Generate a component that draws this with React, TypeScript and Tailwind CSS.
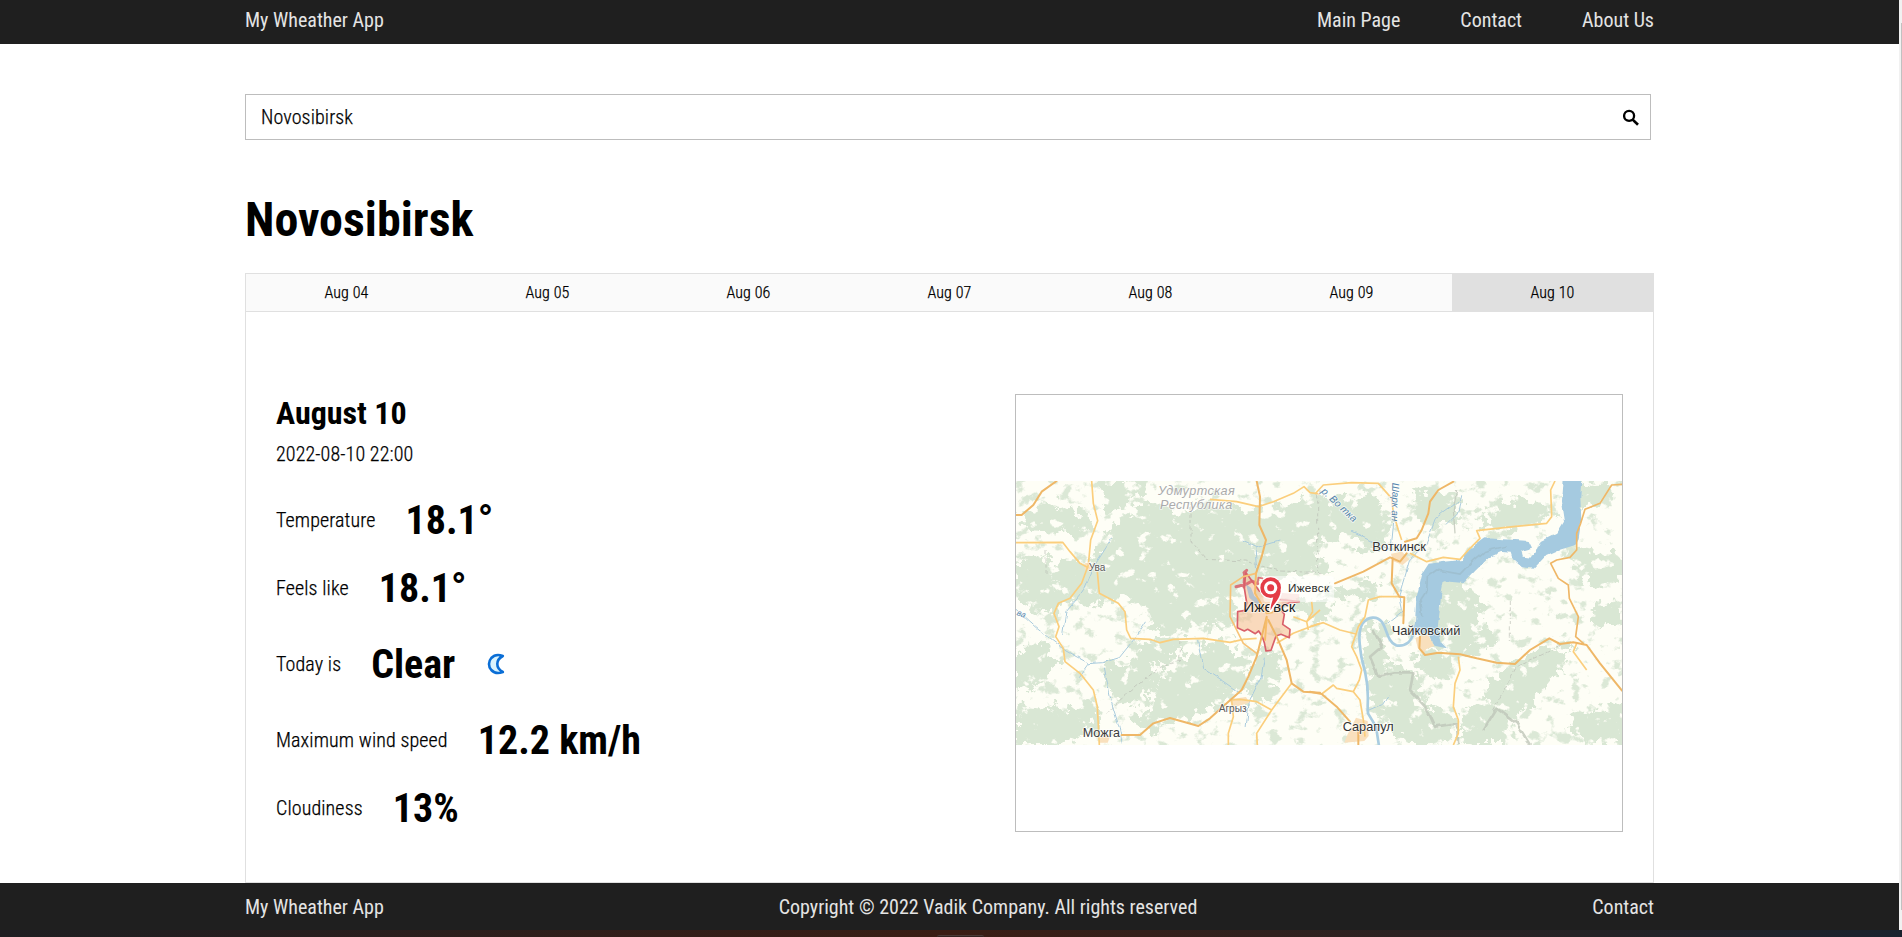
const navLinks = ["Main Page", "Contact", "About Us"];
const days = ["Aug 04", "Aug 05", "Aug 06", "Aug 07", "Aug 08", "Aug 09", "Aug 10"];
const activeDay = "Aug 10";

const lightText = "font-light tracking-[0.11px] [-webkit-text-stroke:0.25px_#000]";

const forests = [
  "M270,110 L345,60 L420,100 L470,75 L560,90 L640,80 L700,80 L760,50 L800,60 L890,130 L965,185 L900,215 L860,170 L790,180 L780,230 L820,290 L640,290 L555,330 L565,460 L500,430 L440,460 L370,470 L330,400 L320,370 L290,355 L230,360 L170,380 L110,310 L0,330 L0,240 L60,225 L130,250 L200,240 L240,160Z",
  "M0,300 L160,320 L120,390 L60,400 L0,370Z",
  "M10,95 L90,75 L190,95 L190,165 L110,155 L30,150Z",
  "M220,0 L340,0 L310,60 L230,100Z",
  "M370,600 L470,500 L560,480 L600,560 L580,630 L530,685 L460,710 L400,725 L340,755 L300,730 L350,660Z",
  "M90,690 L200,665 L215,740 L120,798 L0,798 L0,680Z",
  "M230,560 L330,530 L380,590 L330,660 L250,670Z",
  "M290,475 L440,490 L410,550 L330,550Z",
  "M0,500 L90,490 L110,560 L40,640 L0,620Z",
  "M1090,290 L1170,300 L1205,380 L1190,430 L1250,480 L1160,525 L1050,505 L1070,400Z",
  "M1220,610 L1330,510 L1440,500 L1400,580 L1345,650 L1290,720 L1280,798 L1150,798 L1150,700 L1220,660Z",
  "M890,430 L955,425 L955,550 L1030,580 L1060,670 L1130,710 L1130,798 L1000,798 L940,700 L905,600Z",
  "M1460,0 L1550,0 L1500,80 L1450,95Z",
  "M1200,90 L1330,55 L1410,105 L1300,140 L1210,155Z",
  "M1430,200 L1568,225 L1568,310 L1480,320 L1430,260Z",
  "M730,365 L810,350 L830,395 L770,425Z",
  "M830,325 L940,305 L930,355 L850,355Z",
  "M770,60 L930,40 L970,130 L940,190Z",
  "M1020,30 L1150,40 L1150,90 L1080,150 L1040,130Z",
  "M1420,700 L1568,670 L1568,798 L1470,798Z",
  "M1030,520 L1130,530 L1130,600 L1040,570Z",
  "M620,500 L690,520 L670,640 L610,690 L600,620Z",
  "M1480,380 L1568,370 L1568,440 L1500,430Z",
];

function RegionMap() {
  return (
    <svg viewBox="0 0 1818 792" preserveAspectRatio="none" className="block h-[264px] w-full">
      <defs>
        <filter id="ragged" x="-5%" y="-5%" width="110%" height="110%" colorInterpolationFilters="sRGB">
          <feTurbulence type="fractalNoise" baseFrequency="0.03" numOctaves="4" seed="5" />
          <feDisplacementMap in="SourceGraphic" scale="90" xChannelSelector="R" yChannelSelector="G" />
        </filter>
        <filter id="groves" x="0" y="0" width="100%" height="100%" colorInterpolationFilters="sRGB">
          <feTurbulence type="fractalNoise" baseFrequency="0.024 0.028" numOctaves="5" seed="11" />
          <feColorMatrix values="0 0 0 0 0.859  0 0 0 0 0.910  0 0 0 0 0.839  8 0 0 0 -4.6" />
        </filter>
        <filter id="clearings" x="0" y="0" width="100%" height="100%" colorInterpolationFilters="sRGB">
          <feTurbulence type="fractalNoise" baseFrequency="0.022 0.026" numOctaves="5" seed="23" />
          <feColorMatrix values="0 0 0 0 0.996  0 0 0 0 0.996  0 0 0 0 0.965  0 12 0 0 -7.7" />
        </filter>
        <filter id="wobble" x="-5%" y="-5%" width="110%" height="110%" colorInterpolationFilters="sRGB">
          <feTurbulence type="fractalNoise" baseFrequency="0.03" numOctaves="2" seed="3" />
          <feDisplacementMap in="SourceGraphic" scale="14" xChannelSelector="R" yChannelSelector="G" />
        </filter>
      </defs>

      {/* Land cover */}
      <rect width="1818" height="792" fill="#fefef6" />
      <rect width="1818" height="792" filter="url(#groves)" />
      <g filter="url(#ragged)">
        <g transform="translate(-3 -3) scale(1.1633 1)" fill="#d9e7d4">
          {forests.map((d) => (
            <path key={d} d={d} />
          ))}
        </g>
      </g>
      <rect width="1818" height="792" filter="url(#clearings)" />

      {/* District borders */}
      <g fill="none" stroke="#b9bdb4" strokeWidth="2" strokeDasharray="12 7" filter="url(#wobble)">
        <path d="M525,60 L525,180 L570,235 L690,240 L790,270 L920,275" />
        <path d="M495,480 L490,540 L430,560 L330,640 L270,700" />
        <path d="M905,40 L905,270" />
        <path d="M90,210 L90,280 M1480,360 L1480,480 M1430,690 L1500,560 L1640,490" />
      </g>
      <g transform="translate(882 -33)" fill="none" stroke="#c0c7ba" strokeWidth="8" strokeLinejoin="round" filter="url(#wobble)" opacity="0.8">
        <path d="M190,480 L215,530 L180,560 L205,620 L250,610 L310,610 L300,660 L350,715 L375,770 L440,760 L445,825" />
        <path d="M520,780 L560,715 L620,760 L660,825" />
        <path strokeWidth="4" d="M440,60 L430,120 L435,190" />
      </g>

      {/* Water */}
      <g fill="none" stroke="#a9cbdd" strokeWidth="3" filter="url(#wobble)">
        <path d="M0,385 L60,440 L110,480 L150,510 L220,548 L260,545 L310,530 L350,480 L390,420" />
        <path d="M140,460 L150,390 L200,330 L225,270 L270,200 L290,170 M220,548 L190,590" />
        <path d="M265,560 L285,660 L310,740 L320,790 M545,480 L560,560 L620,600 L670,635" />
        <path d="M745,530 L735,590 L700,660 L690,740 M680,180 L720,200 L725,270 M720,200 L790,180" />
        <path d="M1005,150 L1120,205 M1135,100 L1125,210 M1330,60 L1260,110 L1230,190 L1180,240 L1150,340 L1160,390 L1110,430" />
        <path d="M1055,690 L1100,670 L1120,640 M1290,130 L1330,90 L1340,40" />
      </g>
      <g transform="translate(882 -33)">
        <g filter="url(#wobble)">
          <path fill="#a5cae0" d="M758,25 L814,25 L811,80 L814,150 L806,205 L796,225 L750,239 L706,259 L671,296 L636,292 L608,267 L602,248 L576,246 L536,264 L496,302 L461,339 L401,334 L393,375 L388,435 L383,475 L396,520 L411,535 L376,528 L356,496 L314,475 L319,385 L336,312 L356,281 L396,276 L456,270 L481,237 L526,205 L606,209 L656,213 L666,233 L634,242 L638,260 L661,263 L682,238 L692,213 L742,188 L762,155 L753,95Z" />
          <path fill="none" stroke="#9ebfd0" strokeWidth="5" d="M335,440 L330,400 L350,370 L352,320 L380,300 L450,312 L490,270 L520,245 L590,228" />
        </g>
        <path fill="none" stroke="#a9cde1" strokeWidth="8" d="M315,465 C310,520 285,530 258,526 C232,515 232,480 216,456 C200,436 175,440 158,460 C143,485 148,520 154,560 L166,610 C180,670 170,700 174,730 L198,770 L207,828" />
      </g>

      {/* Towns */}
      <g fill="#f9e0bd">
        <path d="M1125,218 L1158,212 L1180,235 L1160,252 L1130,240Z" />
        <path d="M1198,470 L1235,460 L1255,495 L1230,505 L1225,515 L1205,500Z" />
        <path d="M1020,710 L1055,720 L1058,765 L1045,780 L985,785 L995,760Z" />
        <path d="M208,245 L230,250 L225,270 L205,265Z M245,765 L285,760 L275,785 L250,785Z" />
        <path d="M640,655 L690,648 L700,665 L650,680Z" />
      </g>

      {/* Secondary roads */}
      <g fill="none" stroke="#fbce7c" strokeWidth="5" strokeLinejoin="round">
        <g transform="translate(-18 -33)">
          <path d="M245,33 L250,100 L263,152 L242,210 L235,285 L215,340 L180,385 L145,400 L132,430 L147,470 L137,500 L160,535 L165,575 L210,610 L250,660 L262,710 L268,825" />
          <path d="M18,218 L158,217 L180,245 L210,280 L235,293" />
          <path d="M262,305 L268,370 L325,400 L345,425 L350,480 L362,505 L420,508 L450,518 L490,508 L580,505 L660,517 L700,508 L740,505" />
          <path d="M600,88 L680,95 L745,110 L790,95 L850,70 L882,50 L900,68 L930,72" />
          <path d="M845,640 L800,700 L785,720 L740,695 L690,688 L665,690 L670,740 L655,790 L655,825 M785,720 L740,790 L742,825" />
          <path d="M800,520 L850,490 L875,480 L930,460 M850,440 L890,455 L930,420 M905,395 L908,425 L890,455 L895,480" />
        </g>
        <g transform="translate(882 -33)">
          <path d="M15,72 L40,45 L125,38 L205,40 L245,85 L250,130 L265,180 L275,210" />
          <path d="M300,250 L350,275 L400,262 L450,268 L475,240 L510,205 L500,182 L610,170 L710,160 L725,140 L722,60 L735,33" />
          <path d="M0,470 L40,458 L90,480 L138,492 L145,470 L165,440 L175,390 L210,380 L270,380" />
          <path d="M138,492 L125,530 L140,560 L155,600 L148,630 L130,665 L80,655 L70,645 L35,672 M130,665 L150,690 L160,750 L165,800" />
          <path d="M445,560 L450,600 L435,640 L430,710 L445,750 L445,790 L430,825 M800,520 L790,545 L830,600" />
        </g>
      </g>

      {/* City limits */}
      <path fill="#f5c096" fillOpacity="0.6" stroke="#d9606a" strokeWidth="5" strokeLinejoin="round" d="M690,275 L684,315 L692,365 L688,388 L665,392 L664,440 L685,450 L695,445 L718,458 L728,450 L738,465 L745,485 L750,510 L765,508 L780,465 L795,460 L820,470 L822,445 L800,430 L805,400 L790,380 L820,365 L850,362 L790,355 L730,330Z" />
      <g fill="none" stroke="#d9606a" strokeLinecap="round" strokeLinejoin="round" opacity="0.85">
        <path strokeWidth="9" d="M686,273 L684,318 M684,275 L692,268 M660,317 L690,310 L708,300 L725,308" />
        <path strokeWidth="5" d="M725,308 L727,290 L740,292" />
      </g>
      <path fill="#9bb9d6" fillOpacity="0.7" d="M690,310 L705,320 L715,345 L735,360 L725,372 L700,350Z" />
      <path fill="#f3b4ab" fillOpacity="0.5" d="M790,335 L850,340 L848,360 L800,375Z" />

      {/* Main roads */}
      <g fill="none" stroke="#efb767" strokeWidth="6" strokeLinejoin="round" strokeLinecap="round">
        <g transform="translate(-18 -33)">
          <path d="M14,135 L35,135 L70,105 L95,65 L140,33" />
          <path d="M740,33 L750,80 L748,165 L768,210 L755,260 L738,310" />
          <path d="M738,310 L700,320 L662,345 L660,440 L680,480 L700,520 L740,550" stroke="#f7c377" strokeWidth="5" />
          <path d="M770,440 L755,500 L740,560 L715,620 L695,660 L650,700 L600,745 L565,768 L520,755 L480,744 L430,760 L390,795 L335,795" />
          <path d="M775,450 L800,500 L830,570 L845,640 L880,665 L930,668" />
          <path d="M738,310 L735,370 L770,430 L820,420 M770,445 L765,510" stroke="#f7bd6a" strokeWidth="6" />
        </g>
        <g transform="translate(882 -33)">
          <path d="M430,35 L385,60 L360,95 L355,130 L335,180 L320,205 L285,215" />
          <path d="M75,340 L160,305 L240,262 L270,275 L290,250" />
          <path d="M248,265 L245,340 L268,380 L283,382 L280,460" />
          <path d="M330,500 L328,535 L345,555 L385,548 L450,553 L500,565 L560,578 L615,582 L660,540 L718,505 L750,522 L790,517 L830,525 L870,580 L936,662" />
          <path d="M936,43 L905,45 L870,100 L825,118 L812,160 L800,190 L800,240 L780,262 L740,270 L722,280 L745,325 L775,345 L778,385 L805,440 L797,500 L820,520" strokeWidth="5" />
          <path d="M0,665 L35,672 L80,710 L120,755 M145,785 L145,825" />
        </g>
      </g>

      {/* Place names */}
      <g fontFamily="'Liberation Sans', Arial, sans-serif" stroke="#ffffff" strokeOpacity="0.7" strokeWidth="5" strokeLinejoin="round" paintOrder="stroke">
        <g transform="translate(-18 -33)" fill="#3c3c3c">
          <g fill="#ababab" fontStyle="italic" fontSize="38">
            <text x="444" y="74" textLength="230">Удмуртская</text>
            <text x="450" y="117" textLength="217">Республика</text>
          </g>
          <g fontSize="30" fill="#5a5a5a">
            <text x="236" y="304" textLength="50" lengthAdjust="spacingAndGlyphs">Ува</text>
            <text x="626" y="726" textLength="84" lengthAdjust="spacingAndGlyphs">Агрыз</text>
          </g>
          <text x="218" y="800" fontSize="38" textLength="112" lengthAdjust="spacingAndGlyphs">Можга</text>
          <text x="19" y="434" fontSize="25" fontStyle="italic" fill="#5585ab" transform="rotate(22 19 434)">ва</text>
        </g>
        <g transform="translate(882 -33)" fontSize="38" fill="#333333">
          <text x="187" y="243" textLength="161" lengthAdjust="spacingAndGlyphs">Воткинск</text>
          <text x="245" y="494" textLength="206" lengthAdjust="spacingAndGlyphs">Чайковский</text>
          <text x="98" y="783" textLength="153" lengthAdjust="spacingAndGlyphs">Сарапул</text>
          <g fontSize="30" fontStyle="italic" fill="#5585ab">
            <text x="32" y="66" textLength="134" transform="rotate(43 32 66)">р. Во тка</text>
            <text x="247" y="38" textLength="116" transform="rotate(91 247 38)">Шарк ан</text>
          </g>
        </g>
        <text x="682" y="392" fontSize="45" textLength="156" lengthAdjust="spacingAndGlyphs" fill="#222222">Ижевск</text>
      </g>

      {/* Pin */}
      <rect x="742" y="285" width="212" height="78" rx="10" fill="#ffffff" fillOpacity="0.5" />
      <text x="816" y="334" fontFamily="'Liberation Sans', Arial, sans-serif" fontSize="35" textLength="123" fill="#2b2b2b">Ижевск</text>
      <circle cx="764" cy="320" r="34" fill="#ffffff" />
      <path
        d="M772,344 L794,328 C793,356 773,366 764,388 C763,370 771,360 772,344Z"
        fill="#e43c47"
        stroke="#ffffff"
        strokeWidth="10"
        strokeLinejoin="round"
        paintOrder="stroke"
      />
      <circle cx="764" cy="320" r="31" fill="#e43c47" />
      <circle cx="764" cy="320" r="20" fill="#ffffff" />
      <circle cx="764" cy="320" r="10.5" fill="#e43c47" />
    </svg>
  );
}

function SearchIcon() {
  return (
    <svg viewBox="0 0 16 18" className="h-[18px] w-4" fill="none" stroke="#000000">
      <circle cx="6.100" cy="7.800" r="5" strokeWidth="2.300" />
      <path d="M9.700 11.600L15 16.800" strokeWidth="2.700" />
    </svg>
  );
}

function MoonIcon() {
  return (
    <svg viewBox="0 0 24 24" className="h-6 w-6">
      <path
        d="M17.800 4C14 2.600 9.200 2.900 6.300 6C3.200 9.500 3.200 14.500 6.300 18C9.200 21.100 14 21.400 17.800 20C14.200 18 12.300 15.200 12.300 12C12.300 8.800 14.200 6 17.800 4Z"
        fill="#d9f3fd"
        stroke="#0a6ed6"
        strokeWidth="2.600"
        strokeLinejoin="round"
      />
    </svg>
  );
}

function Reading({ label, value, moon = false }: { label: string; value: string; moon?: boolean }) {
  return (
    <div className="flex items-center gap-[30px]">
      <span className={lightText}>{label}</span>
      <span className="pt-0.5 text-[40px] leading-[46px] font-bold">{value}</span>
      {moon && (
        <span className="flex h-16 items-center">
          <MoonIcon />
        </span>
      )}
    </div>
  );
}

export default function App() {
  return (
    <div className="flex h-[937px] w-full flex-col overflow-hidden bg-white font-['Roboto_Condensed',Roboto,sans-serif] text-[20px] leading-6 text-black">
      <div className="flex h-[930px]">
        <div className="flex flex-1 flex-col">
          <header className="flex h-11 items-center justify-between bg-[#1f1f1f] px-[245px] pb-1 text-[#e4e4e4]">
            <span>My Wheather App</span>
            <nav className="flex gap-[60px]">
              {navLinks.map((link) => (
                <a key={link}>{link}</a>
              ))}
            </nav>
          </header>

          <main className="h-[839px] px-[245px] pt-[50px]">
            <div className="mr-[3px] flex h-[46px] items-center justify-between border border-[#bdbdbd] pr-[11px] pl-[15px]">
              <span className={lightText}>Novosibirsk</span>
              <SearchIcon />
            </div>

            <h1 className="mt-[52px] text-[48px] leading-[56px] font-bold">Novosibirsk</h1>

            <div className="mt-[25px] grid h-[39px] grid-cols-7 border border-[#e0e0e0] bg-[#fafafa] text-[16px]">
              {days.map((day) => (
                <div
                  key={day}
                  className={
                    day === activeDay
                      ? "flex items-center justify-center bg-[#e0e0e0]"
                      : "flex items-center justify-center"
                  }
                >
                  <span className={lightText}>{day}</span>
                </div>
              ))}
            </div>

            <section className="flex h-[571px] justify-between border-x border-b border-[#e0e0e0] px-[30px] pt-[82px]">
              <div>
                <h2 className="text-[32px] leading-[38px] font-bold">August 10</h2>
                <p className="mt-[10px]">
                  <span className={lightText}>2022-08-10 22:00</span>
                </p>
                <div className="mt-[30px] flex flex-col gap-5">
                  <Reading label="Temperature" value="18.1°" />
                  <Reading label="Feels like" value="18.1°" />
                  <Reading label="Today is" value="Clear" moon />
                  <Reading label="Maximum wind speed" value="12.2 km/h" />
                  <Reading label="Cloudiness" value="13%" />
                </div>
              </div>
              <div className="flex h-[438px] w-[608px] items-center border border-[#bdbdbd]">
                <RegionMap />
              </div>
            </section>
          </main>

          <footer className="flex h-[47px] items-center justify-between bg-[#1f1f1f] px-[245px] text-[#e4e4e4]">
            <span>My Wheather App</span>
            <span>Copyright © 2022 Vadik Company. All rights reserved</span>
            <span>Contact</span>
          </footer>
        </div>

        <div className="flex w-[3px] justify-end bg-[#f1f1f1] pt-[23px]">
          <div className="h-[887px] w-px bg-[#c1c1c1]" />
        </div>
      </div>

      <div className="flex h-[7px] items-end bg-linear-to-r from-[#1f1d22] via-[#3a1d14] to-[#19232e] pl-[937px]">
        <div className="h-[2px] w-[47px] rounded-t-sm border-t border-[#4a3a36] bg-[#332320]" />
      </div>
    </div>
  );
}
